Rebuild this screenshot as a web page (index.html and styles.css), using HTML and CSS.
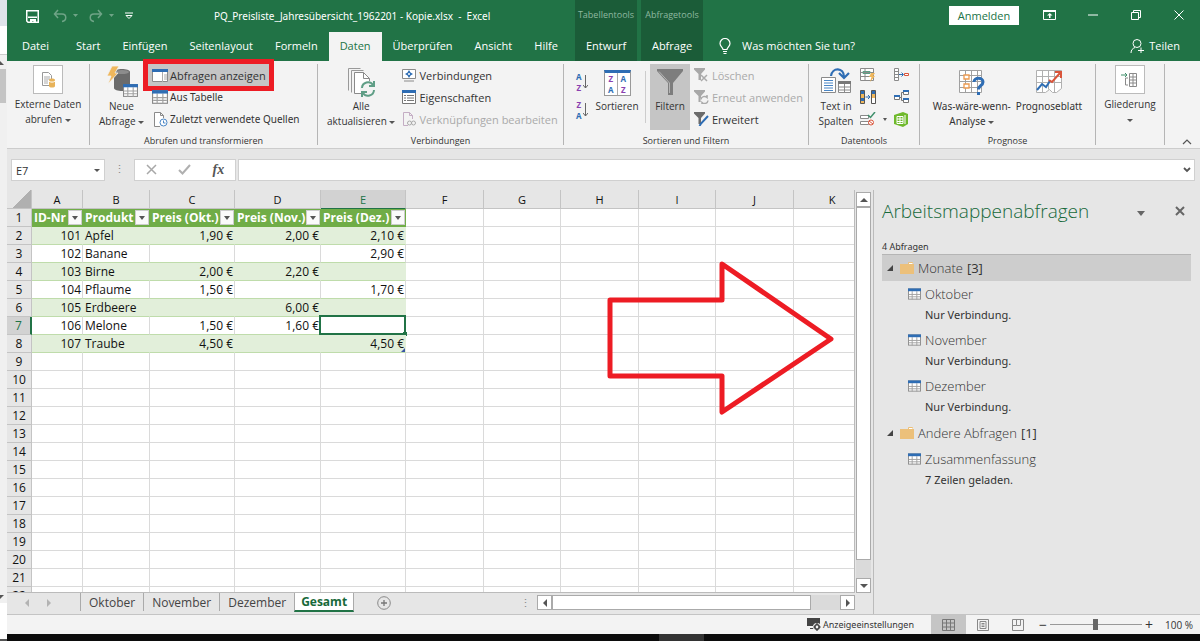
FILE: index.html
```html
<!DOCTYPE html>
<html lang="de">
<head>
    <meta charset="UTF-8">
    <meta name="viewport" content="width=device-width, initial-scale=1.0">
    <title>PQ_Preisliste_Jahresübersicht_1962201 - Kopie.xlsx - Excel</title>
    <link rel="stylesheet" href="styles.css">
</head>
<body>
    <svg class="sprite" aria-hidden="true">
        <symbol id="i-table" viewBox="0 0 14 12">
            <rect x="0.5" y="0.5" width="13" height="11" fill="#fff" stroke="#8a8a8a"/>
            <path d="M4.5 3v9M9.5 3v9M1 6.5h12M1 9h12" stroke="#a0a0a0" fill="none"/>
            <rect width="14" height="3" fill="#2e6db4"/>
        </symbol>
        <symbol id="i-folder" viewBox="0 0 14 12">
            <path d="M8 2V1a1 1 0 0 1 1-1h3a1 1 0 0 1 1 1v1h1v10H0V2z" fill="#ecc07a"/>
            <path d="M9 1.5h3.5" stroke="#fff"/>
        </symbol>
        <symbol id="i-funnel" viewBox="0 0 26 26">
            <path d="M0 0h26v2L16 14v12h-5V14L0 2z" fill="#7d7d7d"/>
            <path d="M2 2.500 12.500 14v10" stroke="#b5b5b5" fill="none"/>
        </symbol>
    </svg>

    <aside class="other-window">
        <div class="ow-title"></div>
        <div class="ow-white"></div>
        <div class="ow-scroll"><i class="tri up"></i><div class="ow-thumb"></div><i class="tri down"></i></div>
        <div class="ow-foot"></div>
    </aside>

    <div class="excel">
        <header class="titlebar">
            <div class="title-left">
                <div class="title-row">
                    <div class="qat">
                        <button aria-label="Speichern"><svg width="13" height="13" viewBox="0 0 13 13"><path d="M.75.75h11.500v11.500H2L.75 11z" fill="none" stroke="#fff" stroke-width="1.500"/><path d="M2 6.500h9V8H2zM4 9h6v4H7.500v-2H6v2H4z" fill="#fff"/></svg></button>
                        <button class="dim" aria-label="Rückgängig"><svg width="32" height="14" viewBox="0 0 32 14"><path d="M5 1 1.500 5 5 9M2 5h7c5 0 5 7 0 7.500" fill="none" stroke="#fff" stroke-width="1.500"/><path d="M20 5h5l-2.500 3z" fill="#fff"/></svg></button>
                        <button class="dim" aria-label="Wiederholen"><svg width="32" height="14" viewBox="0 0 32 14"><path d="M9 1l3.500 4L9 9M12 5H5c-5 0-5 7 0 7.500" fill="none" stroke="#fff" stroke-width="1.500"/><path d="M20 5h5l-2.500 3z" fill="#fff"/></svg></button>
                        <button aria-label="Anpassen"><svg width="8" height="8" viewBox="0 0 8 8"><path d="M0 1h8M1 3.500h6L4 6.500z" fill="none" stroke="#fff"/></svg></button>
                    </div>
                    <div class="doc-title">PQ_Preisliste_Jahresübersicht_1962201 - Kopie.xlsx &nbsp;-&nbsp; Excel</div>
                </div>
                <nav class="tabs">
                    <button>Datei</button>
                    <button>Start</button>
                    <button>Einfügen</button>
                    <button>Seitenlayout</button>
                    <button>Formeln</button>
                    <button class="active">Daten</button>
                    <button>Überprüfen</button>
                    <button>Ansicht</button>
                    <button>Hilfe</button>
                </nav>
            </div>
            <div class="context-tab"><span>Tabellentools</span><button>Entwurf</button></div>
            <div class="context-tab"><span>Abfragetools</span><button>Abfrage</button></div>
            <div class="title-right">
                <div class="window-row">
                    <button class="login">Anmelden</button>
                    <button class="win" aria-label="Menüband"><svg width="13" height="10" viewBox="0 0 13 10"><path d="M.5.5h12v9H.5z" fill="none" stroke="#fff"/><path d="M0 0h13v2H0zM6 4h1.500v4H6zM4 5.500 6.750 3l2.750 2.500z" fill="#fff"/></svg></button>
                    <button class="win" aria-label="Minimieren"><svg width="10" height="10"><path d="M0 5h10" stroke="#fff"/></svg></button>
                    <button class="win" aria-label="Wiederherstellen"><svg width="10" height="10" viewBox="0 0 10 10"><path d="M.5 2.500h7v7h-7zM2.500 2V.5h7v7H8" fill="none" stroke="#fff"/></svg></button>
                    <button class="win" aria-label="Schließen"><svg width="10" height="10" viewBox="0 0 10 10"><path d="M.5.5l9 9M9.500.5l-9 9" stroke="#fff"/></svg></button>
                </div>
                <div class="tell-row">
                    <button class="tell"><svg width="12" height="16" viewBox="0 0 12 16"><path d="M4 11.500C4 9.500 1 8.500 1 5.500a5 5 0 0 1 10 0c0 3-3 4-3 6zM4 13.500h4M4.500 15.500h3" fill="none" stroke="#fff" stroke-width="1.200"/></svg>Was möchten Sie tun?</button>
                    <button class="share"><svg width="14" height="14" viewBox="0 0 14 14"><circle cx="7" cy="4.500" r="4" fill="none" stroke="#fff"/><path d="M1 14c0-3 1.500-4.500 4-5.500M8 11.500h6M11 8.500v5.500" fill="none" stroke="#fff"/></svg>Teilen</button>
                </div>
            </div>
        </header>

        <section class="ribbon">
            <div class="group g-extern">
                <div class="group-body">
                    <button class="big boxed"><span class="box"><svg width="18" height="18" viewBox="0 0 18 18"><path d="M3.500 1.500h6l3 3v10h-9z" fill="#fff" stroke="#999"/><path d="M5 6h6M5 8h6M5 10h4M5 12h4" stroke="#aaa"/><path d="M10 9c0-2 6-2 6 0v6c0 2-6 2-6 0z" fill="#e8b35a"/><path d="M10 10c1 1.500 5 1.500 6 0" stroke="#fff" fill="none"/></svg></span>Externe Daten<br><span>abrufen <i class="caret"></i></span></button>
                </div>
            </div>
            <div class="group g-query">
                <div class="group-body">
                    <button class="big"><svg width="32" height="32" viewBox="0 0 32 32"><path d="M8 6c0-4 16-4 16 0v16c0 4-16 4-16 0z" fill="#6b6b6b"/><ellipse cx="16" cy="6" rx="7" ry="2" fill="#8c8c8c"/><path d="M6 0h7L9 7h3L2 18l3-8H1z" fill="#efb75c" stroke="#f3f3f3" stroke-width=".8"/><svg x="17" y="18" width="15" height="13"><use href="#i-table"/></svg></svg>Neue<br><span>Abfrage <i class="caret"></i></span></button>
                    <div class="small-list">
                        <button class="small pressed"><svg width="16" height="13" viewBox="0 0 16 13"><path d="M.5.5h15v12H.5z" fill="#fff" stroke="#8a8a8a"/><path d="M10.500 3v10M12 6h3M12 8h3M12 10h3" stroke="#aaa"/><path d="M0 0h16v3H0z" fill="#2e6db4"/></svg>Abfragen anzeigen<span class="callout"></span></button>
                        <button class="small"><svg width="16" height="14"><use href="#i-table"/></svg>Aus Tabelle</button>
                        <button class="small"><svg width="16" height="15" viewBox="0 0 16 15"><path d="M8 14.500H2.500V.5h6l3 3V6M8.500.5v3h3" fill="#fff" stroke="#8a8a8a"/><circle cx="11.500" cy="10.500" r="3.500" fill="#fff" stroke="#4a86c5"/><path d="M11.500 8.500v2.500h2" stroke="#4a86c5" fill="none"/></svg>Zuletzt verwendete Quellen</button>
                    </div>
                </div>
                <div class="group-label">Abrufen und transformieren</div>
            </div>
            <div class="group g-conn">
                <div class="group-body">
                    <button class="big"><svg width="30" height="32" viewBox="0 0 30 32"><path d="M2.500 24.500v-22h12M5.500 26.500v-22h12" fill="none" stroke="#999"/><path d="M8.500 6.500h9l6 6v15h-15z" fill="#fff" stroke="#8a8a8a"/><path d="M17.500 6.500v6h6" fill="none" stroke="#8a8a8a"/><circle cx="22" cy="23" r="8" fill="#f3f3f3"/><path d="M16 22a6 6 0 0 1 11-3M28 15v5h-5M28 24a6 6 0 0 1-11 3M16 31v-5h5" fill="none" stroke="#5f9e86" stroke-width="2"/></svg>Alle<br><span>aktualisieren <i class="caret"></i></span></button>
                    <div class="small-list">
                        <button class="small"><svg width="14" height="14" viewBox="0 0 14 14"><path d="M.5 1.500h13v9H.5zM2 13h10" fill="#fff" stroke="#8a8a8a"/><path d="M7 2l1.500 2.500L11 6 8.500 7.500 7 10 5.500 7.500 3 6l2.500-1.500z" fill="#2e6db4"/><circle cx="7" cy="6" r="1" fill="#fff"/></svg>Verbindungen</button>
                        <button class="small"><svg width="14" height="14" viewBox="0 0 14 14"><path d="M.5.5h13v13H.5z" fill="#fff" stroke="#777"/><path d="M0 0h14v3H0z" fill="#2e6db4"/><path d="M2 5.500h2M5 5.500h7M2 8h2M5 8h7M2 10.500h2M5 10.500h7" stroke="#777"/></svg>Eigenschaften</button>
                        <button class="small" disabled><svg width="14" height="14" viewBox="0 0 14 14"><path d="M6 13.500H1.500V.5h6l3 3V7M7.500.5v3h3" fill="none" stroke="#c4adc4"/><circle cx="7.500" cy="11" r="2" fill="none" stroke="#aaa"/><circle cx="11.500" cy="11" r="2" fill="none" stroke="#aaa"/></svg>Verknüpfungen bearbeiten</button>
                    </div>
                </div>
                <div class="group-label">Verbindungen</div>
            </div>
            <div class="group g-sort">
                <div class="group-body">
                    <div class="sort-pair">
                        <button class="az" aria-label="Aufsteigend"><span><b class="blue">A</b><b class="violet">Z</b></span><svg width="5" height="14" viewBox="0 0 5 14"><path d="M2.500 0v13M0 10l2.500 3L5 10" fill="none" stroke="#666"/></svg></button>
                        <button class="az" aria-label="Absteigend"><span><b class="violet">Z</b><b class="blue">A</b></span><svg width="5" height="14" viewBox="0 0 5 14"><path d="M2.500 0v13M0 10l2.500 3L5 10" fill="none" stroke="#666"/></svg></button>
                    </div>
                    <button class="big sortieren"><span class="sort-box"><b class="violet">Z</b><b class="blue">A</b><b class="blue">A</b><b class="violet">Z</b></span>Sortieren</button>
                    <div class="thin-line"></div>
                    <button class="big filter pressed"><svg width="26" height="32" viewBox="0 0 26 32"><use href="#i-funnel" y="3" width="26" height="26"/></svg>Filtern</button>
                    <div class="small-list">
                        <button class="small" disabled><svg width="15" height="14" viewBox="0 0 15 14"><path d="M0 0h11v1.500L7 6v6H4.500V6L0 1.500z" fill="#a8a8a8"/><path d="M7 7l6 6M13 7l-6 6" stroke="#aaa" stroke-width="1.500"/></svg>Löschen</button>
                        <button class="small" disabled><svg width="15" height="14" viewBox="0 0 15 14"><path d="M0 0h11v1.500L7 6v6H4.500V6L0 1.500z" fill="#a8a8a8"/><circle cx="10.500" cy="10" r="4" fill="#f3f3f3"/><path d="M7 9.500a3.500 3.500 0 0 1 6-2V5M14 10.500a3.500 3.500 0 0 1-6 2V14" fill="none" stroke="#aaa" stroke-width="1.500"/></svg>Erneut anwenden</button>
                        <button class="small"><svg width="15" height="14" viewBox="0 0 15 14"><path d="M0 0h11v1.500L7 6v6H4.500V6L0 1.500z" fill="#6b6b6b"/><path d="M14 4l-7 7.500-1.500 2.500" stroke="#2e6db4" stroke-width="2"/></svg>Erweitert</button>
                    </div>
                </div>
                <div class="group-label">Sortieren und Filtern</div>
            </div>
            <div class="group g-tools">
                <div class="group-body">
                    <button class="big"><svg width="30" height="32" viewBox="0 0 30 32"><path d="M.5 11.500h14v15H.5z" fill="#fff" stroke="#8a8a8a"/><path d="M3 14.500h9M3 17h9M3 19.500h9M3 22h9M3 24.500h9" stroke="#4a86c5"/><path d="M17.500 15.500h12v11h-12z" fill="#fff" stroke="#8a8a8a"/><path d="M17 15h13v3H17z" fill="#777"/><path d="M18 21h11M18 24h11M23.500 18v8" stroke="#888"/><path d="M10 10c1-9 13-9 13 1M18 7l5 5 5-5" fill="none" stroke="#2e6db4" stroke-width="2.200"/></svg>Text in<br>Spalten</button>
                    <div class="tool-grid">
                        <button aria-label="Blitzvorschau"><svg width="16" height="14" viewBox="0 0 16 14"><path d="M.5.5h13v12H.5zM5 .5v12M.5 4.500h13M.5 8.500h13" fill="#fff" stroke="#8a8a8a"/><path d="M3 3.500h7v2H3z" fill="none" stroke="#5f9e86"/><path d="M11 5h4l-2 3h2l-5 6 1.500-5H9z" fill="#efb75c"/></svg></button>
                        <button aria-label="Konsolidieren"><svg width="16" height="14" viewBox="0 0 16 14"><path d="M.5.5h4v12h-4zM.5 3.500h4M.5 6.500h4M.5 9.500h4" fill="#fff" stroke="#8a8a8a"/><path d="M5 6.500h4M7.500 4.500l2 2-2 2" stroke="#2e6db4" fill="none"/><path d="M10.500 5.500h4v2h-4z" fill="#fff" stroke="#d9543a"/></svg></button>
                        <button aria-label="Duplikate entfernen"><svg width="16" height="14" viewBox="0 0 16 14"><path d="M.5.5h4v13h-4zM11.500.5h4v13h-4z" fill="#efb75c" stroke="#555"/><path d="M1 1h3v3H1zM1 8h3v3H1zM12 1h3v3h-3z" fill="#2e6db4"/><path d="M12 8h3v5h-3z" fill="#fff"/><path d="M5.500 7h4M8 5l2 2-2 2" stroke="#2e6db4" fill="none"/></svg></button>
                        <button aria-label="Beziehungen"><svg width="16" height="14" viewBox="0 0 16 14"><path d="M.5 5.500h5v4h-5zM9.500.5h5v4h-5zM9.500 8.500h5v4h-5z" fill="#fff" stroke="#777"/><path d="M0 5h6v2H0zM9 0h6v2H9zM9 8h6v2H9z" fill="#2e6db4"/><path d="M6 7.500h1.500v-5H9M7.500 7.500v3H9" stroke="#777" fill="none"/></svg></button>
                        <button aria-label="Datenüberprüfung" class="with-caret"><svg width="16" height="14" viewBox="0 0 16 14"><path d="M.5 3.500h8v3h-8zM.5 9.500h8v3h-8z" fill="#fff" stroke="#8a8a8a"/><path d="M8 3l2.500 2.500L15 0" stroke="#3f8f6b" stroke-width="1.500" fill="none"/><circle cx="11" cy="10.500" r="2.500" fill="#fff" stroke="#d9543a"/><path d="M9 9l4 3" stroke="#d9543a"/></svg></button>
                        <button aria-label="Datenmodell"><svg width="14" height="15" viewBox="0 0 14 15"><path d="M0 3l9-3 5 2v10l-5 3-9-3z" fill="#6fb92c"/><path d="M3 4.500h6v7H3zM3 7h6M3 9.500h6M6 4.500v7M11 3v9" stroke="#fff" fill="none"/></svg></button>
                    </div>
                </div>
                <div class="group-label">Datentools</div>
            </div>
            <div class="group g-forecast">
                <div class="group-body">
                    <button class="big"><svg width="30" height="32" viewBox="0 0 30 32"><path d="M2.500 4.500h22v22h-22zM2.500 9.500h22M2.500 15.500h22M2.500 21.500h22M8.500 4.500v22M14.500 4.500v22M20.500 4.500v22" fill="#fff" stroke="#a0a0a0"/><path d="M7 9h5v4H7zM7 18h5v4H7z" fill="#fff" stroke="#ec9a50" stroke-width="1.300"/><path d="M17 16c0-5 9-5 9 0 0 4-4.500 3-4.500 7.500" fill="none" stroke="#2e6db4" stroke-width="3"/><path d="M20 26h3v3h-3z" fill="#2e6db4"/></svg>Was-wäre-wenn-<br><span>Analyse <i class="caret"></i></span></button>
                    <button class="big"><svg width="28" height="32" viewBox="0 0 28 32"><path d="M1.500 4.500h25v18l-5 4h-4l-3-3-4 3h-9zM1.500 10.500h25M1.500 16.500h25M7.500 4.500v22M13.500 4.500v19M19.500 4.500v22" fill="#fff" stroke="#b0b0b0"/><path d="M2 24l5-6 4 3 4-6" fill="none" stroke="#2e6db4" stroke-width="2"/><path d="M14 14l3 2 8-9M20 6h6v6" fill="none" stroke="#d9543a" stroke-width="2"/></svg>Prognoseblatt</button>
                </div>
                <div class="group-label">Prognose</div>
            </div>
            <div class="group g-outline">
                <div class="group-body">
                    <button class="big boxed"><span class="box"><svg width="18" height="16" viewBox="0 0 18 16"><path d="M8.500 1.500h7v13h-7zM8.500 5h7M8.500 8h7M8.500 11h7M12 1.500v13" fill="#fff" stroke="#8a8a8a"/><path d="M7 6H4.500v7H7" fill="none" stroke="#8a8a8a"/><path d="M0 3h6M4 1l2 2-2 2" fill="none" stroke="#3f8f6b"/></svg></span>Gliederung<br><i class="caret"></i></button>
                </div>
            </div>
            <button class="collapse" aria-label="Menüband reduzieren"><svg width="10" height="6" viewBox="0 0 10 6"><path d="M1 5l4-4 4 4" fill="none" stroke="#555" stroke-width="1.200"/></svg></button>
        </section>

        <section class="formula-bar">
            <div class="name-box"><input type="text" value="E7" aria-label="Namenfeld"><i class="caret"></i></div>
            <span class="dots">⋮</span>
            <div class="fx-box">
                <button aria-label="Abbrechen"><svg width="11" height="11" viewBox="0 0 11 11"><path d="M1 1l9 9M10 1l-9 9" stroke="#a8a8a8" stroke-width="1.500"/></svg></button>
                <button aria-label="Eingeben"><svg width="13" height="11" viewBox="0 0 13 11"><path d="M1 6l3.500 3.500L12 1" fill="none" stroke="#b0b0b0" stroke-width="2"/></svg></button>
                <button class="fx" aria-label="Funktion einfügen">fx</button>
            </div>
            <div class="formula"><input type="text" aria-label="Bearbeitungsleiste"><svg width="8" height="6" viewBox="0 0 8 6"><path d="M1 1l3 3 3-3" fill="none" stroke="#555" stroke-width="1.800"/></svg></div>
        </section>

        <main class="workspace">
            <div class="book">
                <div class="sheet-area">
                    <div class="sheet">
                        <table id="grid">
                            <colgroup><col class="c-row"><col class="c-a"><col class="c-b"><col class="c-c"><col class="c-d"><col class="c-c"><col class="c-f"><col class="c-g"><col class="c-f"><col class="c-g"><col class="c-f"><col class="c-g"></colgroup>
                            <thead>
                                <tr><th class="corner"></th><th>A</th><th>B</th><th>C</th><th>D</th><th class="sel">E</th><th>F</th><th>G</th><th>H</th><th>I</th><th>J</th><th>K</th></tr>
                            </thead>
                            <tbody>
                                <tr class="head"><th>1</th><td><div>ID-Nr<button aria-label="Filter ID-Nr"></button></div></td><td><div>Produkt<button aria-label="Filter Produkt"></button></div></td><td><div>Preis (Okt.)<button aria-label="Filter Okt."></button></div></td><td><div>Preis (Nov.)<button aria-label="Filter Nov."></button></div></td><td><div>Preis (Dez.)<button aria-label="Filter Dez."></button></div></td></tr>
                                <tr class="band"><th>2</th><td class="num">101</td><td>Apfel</td><td class="num">1,90 €</td><td class="num">2,00 €</td><td class="num">2,10 €</td></tr>
                                <tr class="plain"><th>3</th><td class="num">102</td><td>Banane</td><td></td><td></td><td class="num">2,90 €</td></tr>
                                <tr class="band"><th>4</th><td class="num">103</td><td>Birne</td><td class="num">2,00 €</td><td class="num">2,20 €</td><td></td></tr>
                                <tr class="plain"><th>5</th><td class="num">104</td><td>Pflaume</td><td class="num">1,50 €</td><td></td><td class="num">1,70 €</td></tr>
                                <tr class="band"><th>6</th><td class="num">105</td><td>Erdbeere</td><td></td><td class="num">6,00 €</td><td></td></tr>
                                <tr class="plain"><th class="sel">7</th><td class="num">106</td><td>Melone</td><td class="num">1,50 €</td><td class="num">1,60 €</td><td class="cursor"></td></tr>
                                <tr class="band"><th>8</th><td class="num">107</td><td>Traube</td><td class="num">4,50 €</td><td></td><td class="num last">4,50 €</td></tr>
                            </tbody>
                        </table>
                    </div>
                    <div class="vscroll">
                        <button aria-label="Nach oben"><i class="tri up"></i></button>
                        <div class="thumb"></div>
                        <div class="track"></div>
                        <button aria-label="Nach unten"><i class="tri down"></i></button>
                    </div>
                </div>
                <div class="sheet-bar">
                    <div class="sheet-nav"><i class="tri left"></i><i class="tri right"></i></div>
                    <button class="sheet-tab">Oktober</button>
                    <button class="sheet-tab">November</button>
                    <button class="sheet-tab">Dezember</button>
                    <button class="sheet-tab active">Gesamt</button>
                    <button class="add-sheet" aria-label="Neues Blatt"><svg width="14" height="14" viewBox="0 0 14 14"><circle cx="7" cy="7" r="6.300" fill="none" stroke="#888"/><path d="M4 7h6M7 4v6" stroke="#777" stroke-width="1.300"/></svg></button>
                    <span class="dots">⋮</span>
                    <div class="hscroll">
                        <button aria-label="Nach links"><i class="tri left"></i></button>
                        <div class="thumb"></div>
                        <div class="track"></div>
                        <button aria-label="Nach rechts"><i class="tri right"></i></button>
                    </div>
                </div>
                <svg class="arrow" width="230" height="158" viewBox="0 0 230 158"><path d="M4 40h112V4l109 75-109 73v-36H4z" fill="none" stroke="#ed1c24" stroke-width="5" stroke-linejoin="round"/></svg>
            </div>

            <aside class="pane">
                <div class="pane-head">
                    <h2>Arbeitsmappenabfragen</h2>
                    <button aria-label="Optionen"><svg width="8" height="5"><path d="M0 0h8L4 5z" fill="#666"/></svg></button>
                    <button aria-label="Schließen"><svg width="10" height="10" viewBox="0 0 10 10"><path d="M1 1l8 8M9 1l-8 8" stroke="#666" stroke-width="2"/></svg></button>
                </div>
                <p class="count">4 Abfragen</p>
                <ul class="queries">
                    <li>
                        <div class="folder selected"><i class="open"></i><svg width="14" height="12"><use href="#i-folder"/></svg>Monate <span>[3]</span></div>
                        <ul>
                            <li><div class="name"><svg width="13" height="12"><use href="#i-table"/></svg>Oktober</div><p>Nur Verbindung.</p></li>
                            <li><div class="name"><svg width="13" height="12"><use href="#i-table"/></svg>November</div><p>Nur Verbindung.</p></li>
                            <li><div class="name"><svg width="13" height="12"><use href="#i-table"/></svg>Dezember</div><p>Nur Verbindung.</p></li>
                        </ul>
                    </li>
                    <li>
                        <div class="folder"><i class="open"></i><svg width="14" height="12"><use href="#i-folder"/></svg>Andere Abfragen <span>[1]</span></div>
                        <ul>
                            <li><div class="name"><svg width="13" height="12"><use href="#i-table"/></svg>Zusammenfassung</div><p>7 Zeilen geladen.</p></li>
                        </ul>
                    </li>
                </ul>
            </aside>
        </main>

        <footer class="status">
            <button class="display"><svg width="14" height="13" viewBox="0 0 14 13"><path d="M0 0h13v8H0zM3 10h4v1H3z" fill="#444"/><circle cx="10" cy="9" r="4" fill="#f3f3f3"/><circle cx="10" cy="9" r="2.200" fill="none" stroke="#444" stroke-width="1.500"/><path d="M10 5v2M10 11v2M6.500 9h2M11.500 9h2" stroke="#444" stroke-width="1.300"/></svg>Anzeigeeinstellungen</button>
            <button class="view on" aria-label="Normal"><svg width="13" height="12" viewBox="0 0 13 12"><path d="M.5.5h12v11H.5zM4.500.5v11M8.500.5v11M.5 4h12M.5 8h12" fill="none" stroke="#777"/></svg></button>
            <button class="view" aria-label="Seitenlayout"><svg width="12" height="12" viewBox="0 0 12 12"><path d="M.5.5h11v11H.5zM3 2.500h6v7H3zM4.500 4.500h3M4.500 6h3M4.500 7.500h3" fill="none" stroke="#888"/></svg></button>
            <button class="view" aria-label="Umbruchvorschau"><svg width="12" height="12" viewBox="0 0 12 12"><path d="M.5.5h11v11H.5zM4.500.5v6h-4M8.500.5v6h-4" fill="none" stroke="#888"/></svg></button>
            <button class="zoom-btn" aria-label="Verkleinern">−</button>
            <input type="range" min="0" max="200" value="100" aria-label="Zoom">
            <button class="zoom-btn" aria-label="Vergrößern">+</button>
            <span class="zoom-value">100 %</span>
        </footer>
        <div class="taskbar"><div></div></div>
    </div>

    <script>
        // Leere Zellen rechts der Tabelle und leere Zeilen 9 bis 22
        const body = document.querySelector('#grid tbody');
        for (const row of body.rows) {
            while (row.cells.length < 12) {
                row.insertCell().className = 'empty';
            }
        }
        for (let n = 9; n <= 22; n++) {
            const row = body.insertRow();
            const head = document.createElement('th');
            head.textContent = n;
            row.appendChild(head);
            while (row.cells.length < 12) {
                row.insertCell().className = 'empty';
            }
        }
    </script>
</body>
</html>
```
FILE: styles.css
```css
* {
    box-sizing: border-box;
}
body {
    margin: 0;
    height: 100vh;
    display: flex;
    overflow: hidden;
    font-family: "Open Sans", "Noto Sans", sans-serif;
    font-size: 11px;
    color: #333;
    background: #fff;
}
button {
    font: inherit;
    color: inherit;
    background: none;
    border: none;
    padding: 0;
    white-space: nowrap;
}
input {
    font: inherit;
    color: inherit;
    border: none;
    padding: 0;
    background: none;
    min-width: 0;
}
ul, p, h2 {
    margin: 0;
    padding: 0;
    list-style: none;
}
svg {
    flex: none;
}
.sprite {
    display: none;
}
.caret {
    display: inline-block;
    border: 3px solid transparent;
    border-top-color: #555;
    border-bottom: 0;
    vertical-align: middle;
}
.tri {
    border: 4px solid transparent;
}
.up { border-bottom-color: #555; border-top: 0; }
.down { border-top-color: #555; border-bottom: 0; }
.left { border-right-color: #555; border-left: 0; }
.right { border-left-color: #555; border-right: 0; }

/* Fenster am linken Rand */
.other-window {
    width: 7px;
    flex: none;
    display: flex;
    flex-direction: column;
    overflow: hidden;
}
.ow-title {
    height: 26px;
    background: #dfe4ea;
}
.ow-white {
    height: 28px;
}
.ow-scroll {
    flex: 1;
    display: flex;
    flex-direction: column;
    align-items: flex-start;
    padding: 6px 0 4px;
    background: #f0f0f0;
    border-top: 1px solid #ccc;
}
.ow-scroll .tri {
    margin-left: -4px;
}
.ow-scroll .down {
    margin-top: auto;
}
.ow-thumb {
    width: 6px;
    height: 34px;
    margin-top: 4px;
    background: #c4c4c4;
}
.ow-foot {
    height: 38px;
    border-bottom: 2px solid #555;
}

.excel {
    flex: 1;
    min-width: 0;
    display: flex;
    flex-direction: column;
    background: #e6e6e6;
}

/* Titelleiste */
.titlebar {
    display: flex;
    background: #217346;
    color: #fff;
}
.title-left {
    width: 568px;
    display: flex;
    flex-direction: column;
}
.title-row {
    height: 32px;
    display: flex;
    align-items: center;
}
.qat {
    width: 207px;
    padding-left: 19px;
    display: flex;
    align-items: center;
    gap: 14px;
}
.qat button {
    display: flex;
}
.qat button + button + button {
    margin-left: -10px;
}
.qat .dim {
    opacity: 0.35;
}
.doc-title {
    font-family: "Noto Sans", sans-serif;
    font-size: 10px;
    white-space: nowrap;
}
.tabs {
    display: flex;
    height: 29px;
    padding-left: 4px;
}
.tabs button {
    padding: 0 11px 2px;
}
.tabs button:first-child {
    margin-right: 5px;
}
.tabs .active {
    background: #f3f3f3;
    color: #217346;
}
.context-tab {
    width: 62px;
    margin-right: 4px;
    display: flex;
    flex-direction: column;
    align-items: center;
    background: #1b5c38;
}
.context-tab span {
    font-size: 9px;
    line-height: 30px;
    height: 32px;
    color: #8fb9a0;
    white-space: nowrap;
}
.context-tab button {
    height: 29px;
    padding-bottom: 2px;
}
.title-right {
    flex: 1;
}
.window-row {
    height: 30px;
    display: flex;
    justify-content: flex-end;
    align-items: center;
}
.login {
    width: 70px;
    height: 19px;
    margin-right: 9px;
    background: #fff;
    color: #217346;
}
.win {
    width: 43px;
    height: 30px;
    display: flex;
    align-items: center;
    justify-content: center;
}
.tell-row {
    height: 31px;
    display: flex;
    justify-content: space-between;
    padding: 0 20px 0 12px;
}
.tell, .share {
    display: flex;
    align-items: center;
    gap: 11px;
}
.share {
    gap: 5px;
}

/* Menüband */
.ribbon {
    display: flex;
    padding: 3px 0 0;
    height: 88px;
    background: #f3f3f3;
    border-bottom: 1px solid #ccc;
}
.group {
    flex: none;
    height: 81px;
    border-right: 1px solid #b5b5b5;
}
.g-extern { width: 83px; }
.g-query { width: 228px; }
.g-conn { width: 246px; }
.g-sort { width: 245px; }
.g-tools { width: 111px; }
.g-forecast { width: 176px; }
.g-outline { width: 69px; }
.group-body {
    height: 70px;
    display: flex;
    align-items: flex-start;
    justify-content: center;
}
.group-label {
    font-size: 9px;
    line-height: 14px;
    text-align: center;
}
.big {
    line-height: 15px;
    font-size: 10px;
    text-align: center;
}
.big > svg {
    display: block;
    margin: 2px auto 1px;
}
.box {
    width: 30px;
    height: 29px;
    margin: 1px auto 3px;
    display: flex;
    align-items: center;
    justify-content: center;
    background: #fff;
    border: 1px solid #bbb;
}
.small-list {
    display: flex;
    flex-direction: column;
    align-items: flex-start;
}
.small {
    position: relative;
    height: 22px;
    padding: 0 4px;
    display: flex;
    align-items: center;
    gap: 3px;
}
.small:disabled {
    color: #aaa;
}
.pressed {
    background: #c5c5c5;
}
.callout {
    position: absolute;
    inset: -5px -4px -5px -5px;
    border: 5px solid #ed1c24;
}
.g-query .group-body,
.g-conn .group-body {
    justify-content: flex-start;
    padding-left: 9px;
}
.g-query .small-list {
    margin-left: 4px;
}
.g-conn .small-list {
    margin-left: 3px;
}
.g-query .small {
    font-family: "Noto Sans", sans-serif;
    font-size: 10px;
    gap: 2px;
}
.g-query .small.pressed {
    font-family: inherit;
    font-size: 11px;
}
.g-sort .group-body {
    justify-content: flex-start;
    padding-left: 12px;
}
.sort-pair {
    width: 14px;
    padding-top: 7px;
    display: flex;
    flex-direction: column;
    gap: 6px;
}
.az {
    display: flex;
    align-items: center;
    gap: 1px;
    font-size: 8px;
    line-height: 11px;
}
.az b {
    display: block;
}
.blue { color: #2e6db4; }
.violet { color: #8a3fb0; }
.sortieren {
    width: 52px;
    margin-left: 1px;
}
.sort-box {
    display: grid;
    grid-template-columns: 1fr 1fr;
    width: 27px;
    height: 26px;
    margin: 6px auto 3px;
    background: linear-gradient(#aaa, #aaa) center / 1px 100% no-repeat #fff;
    border: 1px solid #999;
    border-top: 3px solid #2e6db4;
    font-size: 8px;
    line-height: 11px;
}
.thin-line {
    height: 52px;
    margin: 7px 4px 0 2px;
    border-left: 1px solid #ccc;
}
.filter {
    width: 40px;
    padding-bottom: 16px;
}
.tool-grid {
    display: grid;
    grid-template-columns: 34px 16px;
    grid-auto-rows: 22px;
    margin-left: 6px;
}
.tool-grid button {
    display: flex;
    align-items: center;
    gap: 7px;
}
.with-caret::after {
    content: "";
    border: 2px solid transparent;
    border-top: 3px solid #555;
    border-bottom: 0;
}
.g-forecast .group-body {
    gap: 5px;
}
.g-forecast .big {
    font-family: "Noto Sans", sans-serif;
}
.collapse {
    margin: auto 8px 0 auto;
}

/* Bearbeitungsleiste */
.formula-bar {
    height: 41px;
    padding: 10px 5px 0 4px;
    display: flex;
    align-items: flex-start;
}
.name-box, .fx-box, .formula {
    height: 22px;
    display: flex;
    align-items: center;
    background: #fff;
    border: 1px solid #d0d0d0;
}
.name-box {
    width: 94px;
    padding: 0 4px;
}
.name-box input {
    flex: 1;
}
.dots {
    width: 29px;
    text-align: center;
    line-height: 20px;
    color: #888;
}
.fx-box {
    width: 102px;
    margin-right: 2px;
    justify-content: space-around;
}
.fx {
    font-family: "Liberation Serif", serif;
    font-style: italic;
    font-weight: 700;
    font-size: 14px;
    line-height: 16px;
    color: #555;
}
.formula {
    flex: 1;
    padding-right: 3px;
}
.formula input {
    flex: 1;
}

/* Tabellenblatt */
.workspace {
    flex: 1;
    min-height: 0;
    display: flex;
}
.book {
    flex: 1;
    min-width: 0;
    position: relative;
    display: flex;
    flex-direction: column;
    border-right: 1px solid #bbb;
}
.sheet-area {
    flex: 1;
    min-height: 0;
    display: flex;
}
.sheet {
    flex: 1;
    min-width: 0;
    overflow: hidden;
    border-right: 1px solid #bbb;
    border-bottom: 1px solid #bbb;
}
#grid {
    width: 864px;
    table-layout: fixed;
    border-collapse: separate;
    border-spacing: 0;
    font-size: 12px;
    line-height: 17px;
    color: #111;
}
.c-row { width: 25px; }
.c-a { width: 51px; }
.c-b { width: 67px; }
.c-c { width: 85px; }
.c-d { width: 86px; }
.c-f { width: 78px; }
.c-g { width: 77px; }
#grid th {
    height: 18px;
    padding: 0;
    font-weight: 400;
    background: #e6e6e6;
    border-right: 1px solid #c4c4c4;
    border-bottom: 1px solid #c4c4c4;
}
#grid thead th {
    height: 19px;
    padding-top: 1px;
    font-size: 11px;
}
#grid th.sel {
    background: #d2d2d2;
    color: #217346;
    border-bottom-color: #217346;
}
#grid tbody th.sel {
    border-right: 2px solid #217346;
    border-bottom-color: #c4c4c4;
}
#grid .corner {
    background: linear-gradient(135deg, #e6e6e6 55%, #b0b0b0 55%);
}
#grid td {
    height: 18px;
    padding: 0 2px;
    background: #fff;
    border-right: 1px solid #dadada;
    border-bottom: 1px solid #dadada;
    white-space: nowrap;
}
#grid .band td:not(.empty) {
    background: #e2efda;
    border-color: #e2efda;
    border-bottom-color: #bfdcab;
}
#grid .plain td:not(.empty) {
    border-bottom-color: #bfdcab;
}
#grid .head td:not(.empty) {
    padding: 0 0 0 2px;
    background: #70ad47;
    border-color: #70ad47;
    color: #fff;
    font-weight: 700;
}
.head div {
    display: flex;
    justify-content: space-between;
    align-items: center;
}
.head button {
    width: 14px;
    height: 15px;
    display: flex;
    align-items: center;
    justify-content: center;
    background: #fafafa;
    border: 1px solid #ccc;
}
.head button::after {
    content: "";
    border: 3px solid transparent;
    border-top: 4px solid #555;
    border-bottom: 0;
}
#grid .num {
    text-align: right;
    padding-right: 1px;
}
.cursor, .last {
    position: relative;
}
.cursor::before {
    content: "";
    position: absolute;
    inset: -2px -1px -1px -2px;
    border: 2px solid #217346;
}
.cursor::after {
    content: "";
    position: absolute;
    right: -2px;
    bottom: -2px;
    width: 4px;
    height: 4px;
    background: #217346;
}
.last::after {
    content: "";
    position: absolute;
    right: 0;
    bottom: 0;
    border: 2px solid #3b55a5;
    border-top-color: transparent;
    border-left-color: transparent;
}
.vscroll {
    width: 15px;
    margin: 2px 2px 0 1px;
    display: flex;
    flex-direction: column;
}
.vscroll button, .hscroll button {
    width: 15px;
    height: 15px;
    display: flex;
    align-items: center;
    justify-content: center;
    background: #fff;
    border: 1px solid #aaa;
}
.thumb {
    background: #fff;
    border: 1px solid #aaa;
}
.track {
    background: #dadada;
}
.vscroll .thumb { flex: 19; }
.vscroll .track { flex: 1; }
.sheet-bar {
    height: 21px;
    display: flex;
    align-items: flex-start;
}
.sheet-nav {
    width: 73px;
    height: 20px;
    padding-left: 18px;
    display: flex;
    align-items: center;
    gap: 18px;
    opacity: 0.35;
}
.sheet-tab {
    height: 18px;
    padding: 0 8px;
    border-left: 1px solid #aaa;
    font-size: 12px;
    line-height: 17px;
    color: #444;
}
.sheet-tab.active {
    height: 19px;
    padding: 0 6px;
    background: #fff;
    border-right: 1px solid #aaa;
    border-bottom: 2px solid #217346;
    color: #17693a;
    font-weight: 700;
}
.add-sheet {
    margin: 3px auto 0 23px;
}
.hscroll {
    width: 318px;
    margin: 2px 18px 0 -3px;
    display: flex;
}
.hscroll .thumb { flex: 9; }
.hscroll .track { flex: 1; }
.arrow {
    position: absolute;
    left: 599px;
    top: 70px;
}

/* Aufgabenbereich */
.pane {
    width: 326px;
    padding: 8px 9px 0 8px;
}
.pane-head {
    display: flex;
    align-items: center;
    height: 26px;
}
.pane-head h2 {
    flex: 1;
    font-size: 19px;
    font-weight: 300;
    color: #17693a;
}
.pane-head button {
    margin-right: 6px;
    margin-left: 24px;
}
.count {
    margin-top: 16px;
    font-family: "Noto Sans", sans-serif;
    font-size: 9px;
    line-height: 14px;
}
.folder {
    height: 27px;
    padding-left: 5px;
    display: flex;
    align-items: center;
    gap: 4px;
    font-size: 13px;
    font-weight: 300;
}
.folder svg {
    margin-left: 3px;
}
.folder span {
    font-weight: 400;
}
.selected {
    background: #cdcdcd;
    border-top: 1px solid #b5b5b5;
}
.open {
    border: 3px solid #444;
    border-top-color: transparent;
    border-left-color: transparent;
}
.queries .name {
    height: 26px;
    padding-left: 26px;
    display: flex;
    align-items: center;
    gap: 4px;
    font-size: 13px;
    font-weight: 300;
}
.queries p {
    height: 20px;
    padding-left: 43px;
    font-family: "Noto Sans", sans-serif;
    font-size: 11px;
    line-height: 15px;
}

/* Statusleiste */
.status {
    height: 20px;
    padding-right: 7px;
    display: flex;
    align-items: center;
    justify-content: flex-end;
    background: #f3f3f3;
    border-top: 1px solid #c4c4c4;
}
.display {
    display: flex;
    align-items: center;
    gap: 2px;
    margin-right: 17px;
    font-family: "Noto Sans", sans-serif;
    font-size: 9px;
}
.view {
    width: 35px;
    height: 19px;
    display: flex;
    align-items: center;
    justify-content: center;
}
.on {
    background: #c5c5c5;
}
.zoom-btn {
    width: 14px;
    font-size: 14px;
    line-height: 16px;
}
.status input {
    width: 92px;
    height: 12px;
    margin: 0;
    appearance: none;
    background: linear-gradient(#999, #999) center / 100% 1px no-repeat;
}
.status input::-webkit-slider-thumb {
    appearance: none;
    width: 5px;
    height: 11px;
    background: #666;
}
.zoom-value {
    margin-left: 9px;
    font-size: 10px;
}
.taskbar {
    height: 7px;
    background: #0c0c0c;
}
.taskbar div {
    width: 45px;
    height: 7px;
    margin-left: 652px;
    background: #333;
}
```
